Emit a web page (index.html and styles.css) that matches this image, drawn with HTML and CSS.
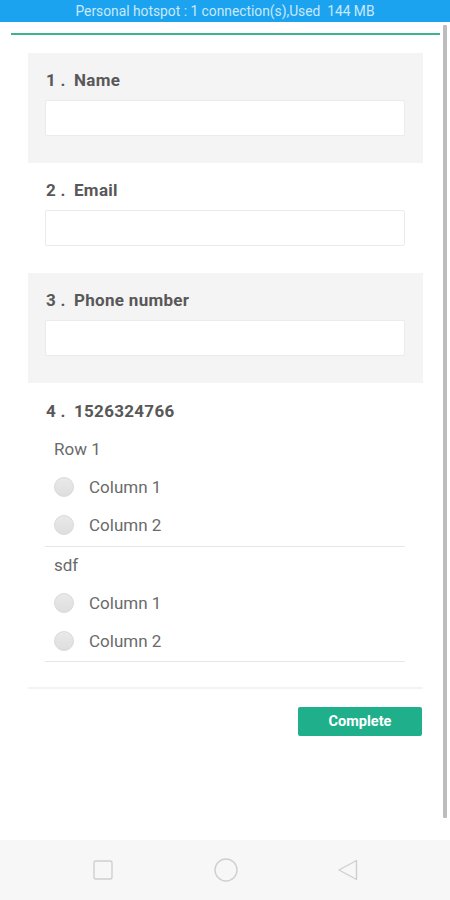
FILE: index.html
```html
<!DOCTYPE html>
<html>
<head>
<meta charset="utf-8">
<link rel="stylesheet" href="styles.css">
</head>
<body>
<div class="status">Personal hotspot : 1 connection(s),Used&nbsp; 144 MB</div>
<div class="content">
  <div class="progress"></div>
  <div class="form">
    <div class="q gray">
      <div class="qtitle"><span class="num">1 .</span>Name</div>
      <div class="input"></div>
    </div>
    <div class="q">
      <div class="qtitle"><span class="num">2 .</span>Email</div>
      <div class="input"></div>
    </div>
    <div class="q gray">
      <div class="qtitle"><span class="num">3 .</span>Phone number</div>
      <div class="input"></div>
    </div>
    <div class="q matrix">
      <div class="qtitle"><span class="num">4 .</span>1526324766</div>
      <div class="group">
        <div class="rowlabel">Row 1</div>
        <div class="opt"><span class="radio"></span>Column 1</div>
        <div class="opt"><span class="radio"></span>Column 2</div>
      </div>
      <div class="group">
        <div class="rowlabel">sdf</div>
        <div class="opt"><span class="radio"></span>Column 1</div>
        <div class="opt"><span class="radio"></span>Column 2</div>
      </div>
    </div>
    <div class="actions"><button class="btn">Complete</button></div>
  </div>
  <div class="scrollbar"></div>
</div>
<div class="nav">
  <svg width="24" height="24" viewBox="0 0 24 24"><rect x="3" y="3" width="18" height="18" rx="2" fill="none" stroke="#cfcfcf" stroke-width="1.4"/></svg>
  <svg width="26" height="26" viewBox="0 0 26 26"><circle cx="13" cy="13" r="11" fill="none" stroke="#cfcfcf" stroke-width="1.4"/></svg>
  <svg width="24" height="24" viewBox="0 0 24 24"><path d="M20.5 2.5 L3 12 L20.5 21.5 Z" fill="none" stroke="#cfcfcf" stroke-width="1.4" stroke-linejoin="round"/></svg>
</div>
</body>
</html>
```
FILE: styles.css
```css
html, body {
  margin: 0;
  padding: 0;
}
body {
  width: 450px;
  height: 900px;
  font-family: Roboto, "Liberation Sans", sans-serif;
  background: #fff;
  display: flex;
  flex-direction: column;
  overflow: hidden;
}
.status {
  height: 22px;
  background: #1ca3ef;
  color: #c9e8fc;
  font-size: 13.8px;
  line-height: 22px;
  text-align: center;
  flex: none;
}
.content {
  position: relative;
  height: 818px;
  flex: none;
}
.progress {
  margin: 11px 0 0 11px;
  width: 429px;
  height: 2px;
  background: #3db38e;
}
.form {
  margin: 18px 0 0 28px;
  width: 395px;
}
.q {
  padding: 17px 18px 27px 17px;
}
.q.gray {
  background: #f4f4f4;
}
.qtitle {
  font-size: 17px;
  font-weight: bold;
  color: #585858;
  line-height: 20px;
  height: 20px;
  margin-left: 1px;
  letter-spacing: 0.3px;
}
.num {
  display: inline-block;
  width: 28px;
}
.input {
  margin-top: 10px;
  height: 34px;
  background: #fff;
  border: 1px solid #ebebeb;
  border-radius: 2px;
}
.matrix {
  padding-top: 18px;
  padding-bottom: 25px;
  border-bottom: 2px solid #f3f3f3;
}
.group {
  margin-top: 9px;
  border-bottom: 1px solid #e6e6e6;
  padding-left: 9px;
  padding-bottom: 2px;
}
.group + .group {
  margin-top: 0;
  padding-bottom: 1px;
}
.rowlabel, .opt {
  height: 38px;
  line-height: 38px;
  font-size: 17px;
  color: #6a6a6a;
}
.group + .group .rowlabel {
  height: 37px;
  line-height: 37px;
}
.opt {
  display: flex;
  align-items: center;
}
.radio {
  width: 18px;
  height: 18px;
  border-radius: 50%;
  border: 1px solid #dadada;
  background: linear-gradient(#e9e9e9, #dedede);
  margin-right: 15px;
}
.actions {
  display: flex;
  justify-content: flex-end;
  margin-top: 18px;
}
.btn {
  width: 124px;
  height: 29px;
  border: none;
  border-radius: 2px;
  background: #1fb08b;
  color: #fff;
  font-family: Roboto, "Liberation Sans", sans-serif;
  font-weight: bold;
  font-size: 14.5px;
  padding: 0;
  margin-right: 1px;
}
.scrollbar {
  position: absolute;
  right: 3px;
  top: 3px;
  width: 4px;
  height: 793px;
  background: #bdbdbd;
  border-radius: 1px;
}
.nav {
  height: 60px;
  background: #f7f7f7;
  flex: none;
  display: flex;
  align-items: center;
  justify-content: space-between;
  padding: 0 90px 0 91px;
}
```
